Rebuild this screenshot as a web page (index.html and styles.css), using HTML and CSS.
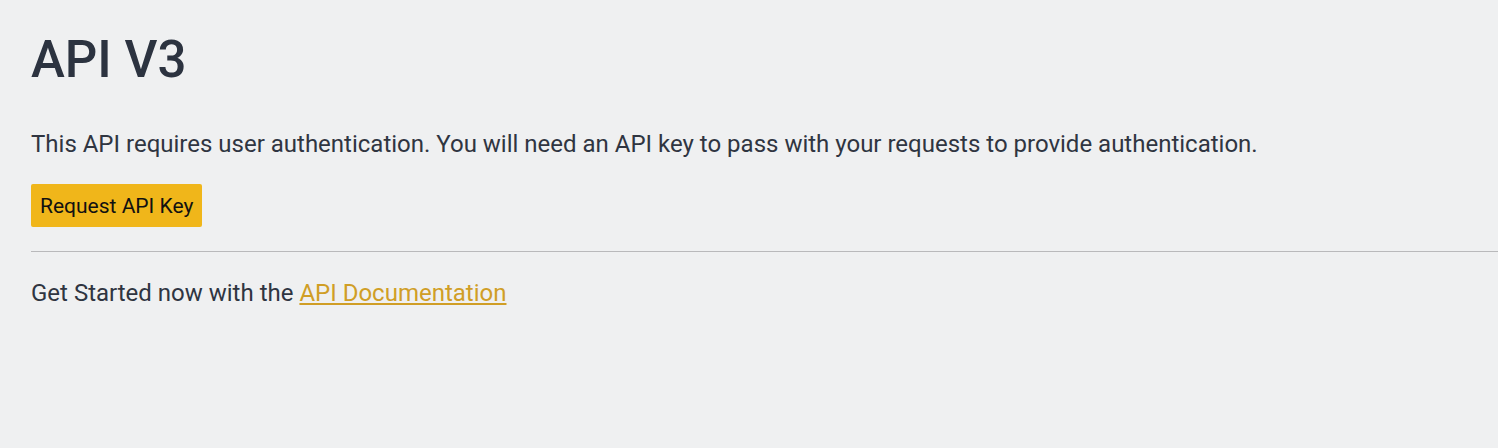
FILE: index.html
```html
<!DOCTYPE html>
<html>
<head>
<meta charset="utf-8">
<link rel="stylesheet" href="styles.css">
</head>
<body>
<main class="page">
  <h1 class="title">API V3</h1>
  <p class="intro">This API requires user authentication. You will need an API key to pass with your requests to provide authentication.</p>
  <button class="btn-key" type="button">Request API Key</button>
  <hr class="divider">
  <p class="started">Get Started now with the <a class="doc-link" href="#">API Documentation</a></p>
</main>
</body>
</html>
```

FILE: styles.css
```css
html, body {
  margin: 0;
  padding: 0;
  background: #eff0f1;
}
body {
  font-family: Roboto, "Noto Sans", sans-serif;
  color: #2f3541;
}
.page {
  padding: 24px 0 0 31px;
  display: flex;
  flex-direction: column;
  align-items: flex-start;
}
.title {
  margin: 0;
  font-size: 51px;
  font-weight: 500;
  line-height: 72px;
  color: #2c3340;
}
.intro {
  margin: 32px 0 0;
  font-size: 24px;
  line-height: 32px;
}
.btn-key {
  margin-top: 24px;
  background: #f0b61a;
  border: none;
  border-radius: 2px;
  padding: 0 9px;
  height: 43px;
  font-family: Roboto, sans-serif;
  font-size: 21px;
  color: #111;
}
.divider {
  align-self: stretch;
  margin: 24px 0 0;
  border: none;
  border-top: 1px solid #b9b9bb;
  height: 0;
}
.started {
  margin: 25px 0 0;
  font-size: 24px;
  line-height: 32px;
}
.doc-link {
  color: #d09e26;
}
```
